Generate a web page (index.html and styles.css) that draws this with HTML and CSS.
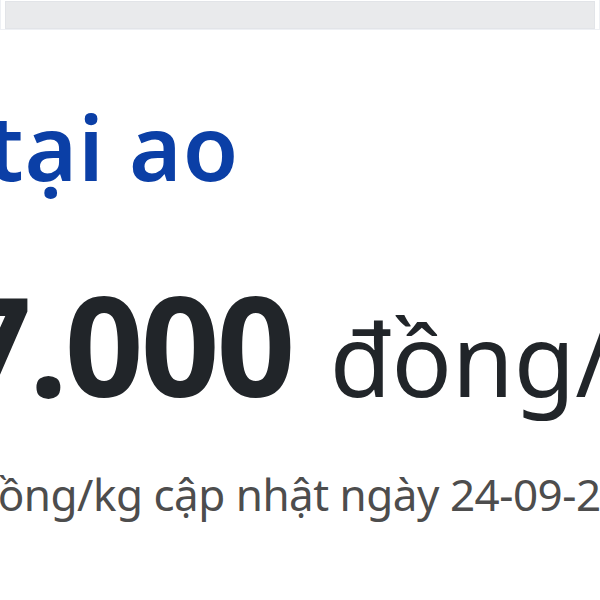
FILE: index.html
```html
<!DOCTYPE html>
<html lang="vi">
<head>
    <meta charset="UTF-8">
    <meta name="viewport" content="width=device-width, initial-scale=1.0">
    <title>Giá cá tra tại ao</title>
    <link rel="stylesheet" href="styles.css">
</head>
<body>

    <div class="topbar">
        <div class="topbar-inner"></div>
    </div>

    <div class="price-box">
        <h1 class="title">tại ao</h1>
        <p class="price"><span class="amount">7.000</span> <span class="unit">đồng/kg</span></p>
        <p class="note">đồng/kg cập nhật ngày 24-09-2024</p>
    </div>

</body>
</html>
```

FILE: styles.css
```css
html, body {
    margin: 0;
    padding: 0;
    background: #ffffff;
    overflow: hidden;
}
body {
    width: 600px;
    height: 600px;
    font-family: "Noto Sans", "Open Sans", sans-serif;
}
.topbar {
    padding: 1px 2px 0 2px;
    border: 1px solid #eef0f4;
    border-top: none;
    height: 30px;
    box-sizing: border-box;
}
.topbar-inner {
    height: 28px;
    margin: 0 2px;
    background: #e9eaec;
    border: 1px solid #e2e4e8;
    box-sizing: border-box;
}
.price-box {
    white-space: nowrap;
}
.title {
    margin: 71px 0 0 0;
    font-size: 90px;
    line-height: 1;
    font-weight: 600;
    letter-spacing: 1px;
    color: #0b3fa6;
    text-indent: -13px;
}
.price {
    margin: 83px 0 0 0;
    line-height: 138px;
    height: 138px;
    color: #212529;
    text-indent: -47px;
}
.amount {
    font-size: 138px;
    font-weight: 700;
    letter-spacing: -3px;
}
.unit {
    font-size: 100px;
    font-weight: 400;
    margin-left: 33px;
}
.note {
    margin: 60px 0 0 0;
    font-size: 44px;
    line-height: 1;
    letter-spacing: -0.5px;
    color: #4d4d4d;
    text-indent: -29px;
}
```
